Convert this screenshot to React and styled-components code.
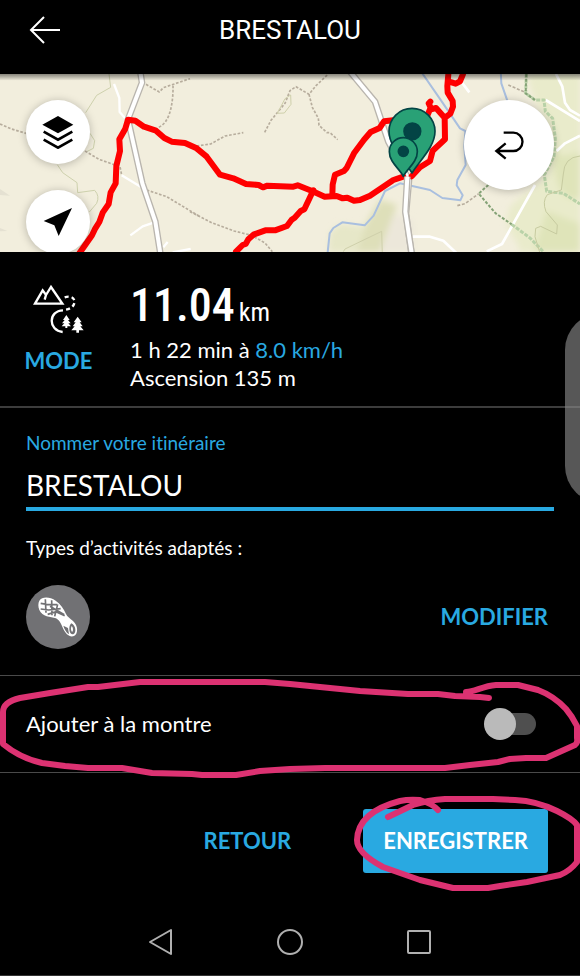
import React, { useState } from "react"
import styled, { createGlobalStyle } from "styled-components"

const blue = "#29a9e1"
const pink = "#dc3272"

const App = () => {
  const [name, setName] = useState("BRESTALOU")
  const [onWatch, setOnWatch] = useState(false)

  return (
    <Page>
      <GlobalStyle />
      <Header>
        <BackButton aria-label="Retour">
          <BackArrow />
        </BackButton>
        <HeaderTitle>BRESTALOU</HeaderTitle>
      </Header>

      <MapArea>
        <RouteMap />
        <MapTools>
          <RoundButton aria-label="Calques"><LayersIcon /></RoundButton>
          <RoundButton aria-label="Ma position"><LocateIcon /></RoundButton>
        </MapTools>
        <UndoButton aria-label="Annuler"><UndoIcon /></UndoButton>
      </MapArea>

      <Stats>
        <ModeButton>
          <TerrainIcon />
          MODE
        </ModeButton>
        <div>
          <Distance>11.04<Unit>km</Unit></Distance>
          <StatLine>1 h 22 min à <Speed>8.0 km/h</Speed></StatLine>
          <StatLine>Ascension 135 m</StatLine>
        </div>
      </Stats>

      <Details>
        <FieldLabel htmlFor="route-name">Nommer votre itinéraire</FieldLabel>
        <NameInput id="route-name" value={name} onChange={e => setName(e.target.value)} />
        <Caption>Types d’activités adaptés :</Caption>
        <Activities>
          <ShoeIcon />
          <TextButton>MODIFIER</TextButton>
        </Activities>
      </Details>

      <WatchRow>
        <label htmlFor="watch">Ajouter à la montre</label>
        <Switch
          id="watch"
          type="checkbox"
          checked={onWatch}
          onChange={e => setOnWatch(e.target.checked)}
        />
        <Scribble viewBox="0 0 580 96" preserveAspectRatio="none">
          <path d="M489 22 480 21 455 20 438 18H408L360 15 290 8 265 6H140L98 11H88L50 17 20 22Q3 26 3 36V68Q20 82 42 87L65 90 88 92H122L152 97 192 98 202 99H236L260 95 290 93 325 92H445L470 89 498 86 510 83 526 82H546L575 69Q578 67 577 62V50Q572 40 566 33Q554 20 538 14L518 9H496C482 10 475 16 466 16" />
        </Scribble>
      </WatchRow>

      <Actions>
        <TextButton>RETOUR</TextButton>
        <SaveButton>ENREGISTRER</SaveButton>
        <Scribble viewBox="0 0 580 116" preserveAspectRatio="none">
          <path d="M388 44 413 32Q428 27 445 26H493L515 27Q537 28 557 38Q573 46 577 52V89Q570 98 560 102L527 109 500 113 488 115H453L420 107 383 94Q357 80 357 67Q358 39 400 28Q409 26 420 27Q433 31 438 37" />
        </Scribble>
      </Actions>

      <SystemBar>
        <SystemKey aria-label="Précédent">
          <svg width="26" height="28" viewBox="0 0 26 28"><path d="M23 2v24L2 14Z" /></svg>
        </SystemKey>
        <SystemKey aria-label="Accueil">
          <svg width="26" height="28" viewBox="0 0 26 28"><circle cx="13" cy="14" r="12" /></svg>
        </SystemKey>
        <SystemKey aria-label="Applications récentes">
          <svg width="26" height="28" viewBox="0 0 26 28"><rect x="2" y="3" width="22" height="22" rx="1" /></svg>
        </SystemKey>
      </SystemBar>

      <EdgeHandle />
    </Page>
  )
}

const BackArrow = () => (
  <svg width="32" height="28" viewBox="0 0 32 28" fill="none" stroke="#fff" strokeWidth="2">
    <path d="M32 14H3M16 1 3 14l13 13" />
  </svg>
)

const LayersIcon = () => (
  <svg width="32" height="34" viewBox="126 134 96 102">
    <path d="M127 163 174 137 220 163 174 189Z" />
    <path d="M131 184 174 208 217 184M131 208 174 232 217 208" fill="none" stroke="#000" strokeWidth="8" />
  </svg>
)

const LocateIcon = () => (
  <svg width="30" height="30" viewBox="127 414 90 90">
    <path d="M214 417 174 501 161 469 129 456Z" />
  </svg>
)

const UndoIcon = () => (
  <svg width="30" height="30" viewBox="341 180 90 90" fill="none" stroke="#000" strokeWidth="7">
    <path d="M370 188H399A27 27 0 0 1 399 243H348M376 220 348 243 376 266" />
  </svg>
)

const TerrainIcon = () => (
  <svg width="52" height="50" viewBox="97 70 156 150" fill="none" stroke="#fff" strokeWidth="7">
    <path d="M103 129 126 89 136 103 151 79 185 129ZM136 103 132 117" />
    <path d="M192 110 C218 101 230 122 215 138 C208 145 197 147 188 148" strokeDasharray="12 9" />
    <path d="M187 149C142 150 142 210 186 214" />
    <g fill="#fff" stroke="none">
      <path d="M197 163 207 178H202L210 188H203L211 197H200V202H194V197H183L191 188H184L192 178H187Z" />
      <path d="M231 168 243 185H237L246 197H239L249 209H235V216H227V209H212L222 197H216L225 185H219Z" />
    </g>
  </svg>
)

const ShoeIcon = () => (
  <svg width="64" height="64" viewBox="33 29 192 192" role="img" aria-label="Course à pied">
    <circle cx="129" cy="125" r="96" fill="#717174" />
    <path d="M73 76C81 63 105 64 122 76C137 87 146 99 153 116C157 125 165 129 174 137C190 151 190 176 177 182C163 187 152 175 145 161C140 149 135 136 123 129C106 124 82 125 73 104C69 94 69 84 73 76Z" fill="#fff" />
    <g fill="none" stroke="#717174" strokeWidth="5">
      <path d="M91 72 93 112M110 75 111 120M128 87 119 123M77 84 101 88 127 88M77 101 101 104 137 100M98 117 123 109 149 121M105 93 148 118" />
    </g>
    <path d="M145 151 159 158 162 177C153 171 148 161 145 151ZM169 144C183 151 185 172 175 177C167 177 163 170 163 160C163 153 165 147 169 144Z" fill="#717174" />
    <path d="M170 152C175 157 175 168 171 170C167 165 167 157 170 152Z" fill="#fff" />
  </svg>
)

// Three tiles of 600 units each, overlapping by 30
const RouteMap = () => (
  <MapSvg viewBox="0 0 1740 534" preserveAspectRatio="xMidYMid slice" aria-hidden="true">
    <defs>
      <filter id="soft"><feGaussianBlur stdDeviation="9" /></filter>
      <linearGradient id="shade" x1="0" y1="0" x2="0" y2="1">
        <stop offset="0" stopOpacity=".45" />
        <stop offset="1" stopOpacity="0" />
      </linearGradient>
    </defs>
    <rect width="1740" height="534" fill="#f2eedd" />

    <g filter="url(#soft)">
      <path d="M1584 0H1740V534H1560C1550 480 1500 470 1530 400C1570 350 1660 330 1650 240C1670 150 1590 90 1584 0Z" fill="#e9ebcb" />
      <path d="M1660 230C1690 260 1740 230 1740 230V370C1700 390 1660 350 1660 230ZM1640 410 1740 450V534H1600Z" fill="#dfe4b9" />
      <path d="M985 534 990 475 1020 450 1090 458 1140 370 1180 390 1190 440 1165 534Z" fill="#e6e7c8" />
      <path d="M1100 450 1140 385 1190 390 1150 534H1070Z" fill="#dedfb9" />
      <path d="M1180 420 1140 534H1240V440Z" fill="#ece7da" />
    </g>
    <path d="M0 345 30 365 0 363ZM0 462 22 471 0 472Z" fill="#e5e1d2" />

    <g fill="none" strokeLinejoin="round">
      <g transform="translate(0 -12)">
        <path d="M327 12 332 52 290 76 257 128M270 190 284 212 280 235 260 245M172 284 188 308 231 338 233 368 284 361Q300 378 290 400L268 426" stroke="#ced1ad" strokeWidth="3" />
        <path d="M0 162 35 177 78 190M255 243 297 268 360 290 365 315M438 43 478 66 490 53 570 26M519 47C520 92 512 162 472 173M440 360 500 380 600 440" stroke="#b7ad9d" strokeWidth="5" strokeDasharray="8 5" />
        <path d="M342 42 358 84 359 126 380 150M365 316 428 354M391 496 428 469 461 458M490 532 503 516M518 547 572 537" stroke="#fff" strokeWidth="7" />
        <path d="M420 0 426 38 384 148 427 340 466 455 482 556" stroke="#b9b5ae" strokeWidth="20" />
        <path d="M420 0 426 38 384 148 427 340 466 455 482 556" stroke="#fff" strokeWidth="12" />
      </g>
      <g transform="translate(570 -12)">
        <path d="M20 228 62 222 105 198 160 188M224 187 243 151 285 100 300 62 318 50 357 73 378 47 415 12M357 73 367 112 385 145 387 166 411 188 420 188 443 209M0 425 65 458 132 483 185 496 225 519 247 545" stroke="#b7ad9d" strokeWidth="5" strokeDasharray="8 5" />
        <path d="M302 75 303 103 283 129 262 130 285 86ZM460 545 465 537 575 484 577 556" stroke="#cfd0ab" strokeWidth="3" />
        <path d="M412 556 419 490 430 474 457 457 524 466 551 437 585 363 630 340 720 360 757 384 811 391 818 376 800 346 802 330 827 285 823 230 826 183 810 175 753 91 690 0M932 0 934 40 953 95" stroke="#a9bfdf" strokeWidth="6" />
        <path d="M480 5 555 95 595 215 657 330 648 430 665 556" stroke="#b9b5ae" strokeWidth="20" />
        <path d="M480 5 555 95 595 215 657 330 648 430 665 556" stroke="#fff" strokeWidth="12" />
      </g>
      <g transform="translate(1140 -12)">
        <path d="M240 30 268 67M528 12 547 50 555 98 570 120 600 137M600 197 555 220 530 243M497 90 600 153M465 345 366 522 320 544M98 500 150 500 190 512 230 550" stroke="#fff" strokeWidth="8" />
        <path d="M385 45 438 68M232 407 255 401 296 371" stroke="#b7ad9d" strokeWidth="5" strokeDasharray="9 5" />
        <path d="M439 12 437 70 465 90 492 90 496 124 518 145 526 205 522 260 493 315 500 364 550 370 600 402M395 463 450 504 490 545" stroke="#b9d2a8" strokeWidth="9" strokeDasharray="12 4" />
        <path d="M439 12 437 70 465 90M325 345 296 371 347 430 395 463" stroke="#85a377" strokeWidth="6" strokeDasharray="9 5" />
        <path d="M600 258Q552 262 550 312L544 360 502 374Q486 394 498 425L532 465 530 492 482 469 467 475 465 500 480 550" stroke="#c7cba0" strokeWidth="3" />
      </g>
      <g stroke="#f00" strokeWidth="18" strokeLinecap="round">
        <g transform="translate(0 -12)">
          <path d="M238 550 276 496 286 475 298 456 308 428 326 402 332 367 347 340 349 288 360 243 358 208 376 176 384 149 406 152 432 170 468 182 493 204 515 215 555 219 590 235 620 260 660 314 700 325 738 342 776 345 789 352 802 347 880 350 893 346 938 364 974 380 1010 378 1028 385 1042 383 1062 392 1080 390 1110 377 1180 330 1210 320" />
        </g>
        <g transform="translate(570 -12)">
          <path d="M138 545 158 525 167 522 175 508 192 493 226 481 255 481 291 468 305 449 314 443 332 423 343 418 370 361M427 378 428 344 435 314 462 303 470 294 493 248 522 209 542 186 569 174 582 154 610 151" />
        </g>
        <g transform="translate(1140 -12)">
          <path d="M142 137 152 113 146 100 151 95M150 119 168 114 194 143 195 208 158 242 150 273 120 292 95 319M195 143 211 131 219 110 218 93 203 68 202 48 205 12M205 34 227 41 240 34 249 12" />
        </g>
      </g>
      <g transform="translate(1140 -12)">
        <path d="M82 320 76 425 96 556" stroke="#b9b5ae" strokeWidth="20" />
        <path d="M82 320 76 425 96 556" stroke="#fff" strokeWidth="12" />
      </g>
      <g transform="translate(1140 -12)" fill="#29a176" stroke="#034445" strokeWidth="5">
        <path d="M96 309C76 274 27 232 27 184A69 69 0 0 1 165 184C165 232 116 274 96 309Z" />
        <circle cx="97" cy="184" r="25" fill="#034445" />
        <path d="M70 319C59 296 28 277 28 245A42 42 0 0 1 112 245C112 277 81 296 70 319Z" />
        <circle cx="70" cy="244" r="15" fill="#034445" />
      </g>
    </g>
    <rect width="1740" height="20" fill="url(#shade)" />
  </MapSvg>
)

const GlobalStyle = createGlobalStyle`
  * {
    box-sizing: border-box;
  }

  body {
    margin: 0;
    background: #000;
  }

  button, input {
    font: inherit;
    color: inherit;
    margin: 0;
  }

  button {
    border: 0;
    padding: 0;
    background: none;
    cursor: pointer;
  }

  svg {
    display: block;
  }
`

const Page = styled.div`
  position: relative;
  overflow: hidden;
  min-height: 100vh;
  display: flex;
  flex-direction: column;
  background: #000;
  color: #fff;
  font-family: Lato, "Open Sans", sans-serif;
  font-size: 22px;
  font-variant-ligatures: none;
  line-height: 28px;
`

const Header = styled.header`
  display: grid;
  grid-template-columns: 60px 1fr 60px;
  align-items: center;
  padding: 8px 0 22px;
`

const BackButton = styled.button`
  display: flex;
  justify-content: flex-end;
  padding: 8px 0;
`

const HeaderTitle = styled.h1`
  margin: 0;
  text-align: center;
  font-family: Roboto, sans-serif;
  font-size: 26px;
  font-weight: 400;
`

const MapArea = styled.section`
  position: relative;
  overflow: hidden;
  height: 178px;
`

const MapSvg = styled.svg`
  width: 100%;
  height: 100%;
`

const MapTools = styled.div`
  position: absolute;
  top: 26px;
  left: 26px;
  display: flex;
  flex-direction: column;
  gap: 26px;
`

const RoundButton = styled.button`
  display: flex;
  align-items: center;
  justify-content: center;
  width: 64px;
  height: 64px;
  border-radius: 50%;
  background: #fff;
  box-shadow: 0 1px 8px rgba(0, 0, 0, 0.25);
`

const UndoButton = styled(RoundButton)`
  position: absolute;
  top: 26px;
  right: 26px;
  width: 90px;
  height: 90px;
`

const Stats = styled.section`
  display: grid;
  grid-template-columns: 65px 1fr;
  column-gap: 39px;
  padding: 29px 26px 14px;
  border-bottom: 2px solid #3c3c3c;
`

const ModeButton = styled.button`
  display: flex;
  flex-direction: column;
  align-items: center;
  gap: 13px;
  align-self: flex-start;
  padding-top: 3px;
  color: ${blue};
  font-weight: 700;
`

const Distance = styled.div`
  display: flex;
  align-items: baseline;
  gap: 4px;
  font-family: "Roboto Condensed", "Liberation Sans Narrow", Roboto, sans-serif;
  font-size: 46px;
  font-weight: 500;
  line-height: 48px;
`

const Unit = styled.span`
  font-size: 26px;
  font-weight: 400;
`

const StatLine = styled.p`
  margin: 0;
`

const Speed = styled.span`
  color: ${blue};
`

const Details = styled.section`
  display: flex;
  flex-direction: column;
  padding: 22px 26px 26px;
  border-bottom: 1px solid #4a4a4a;
`

const FieldLabel = styled.label`
  color: ${blue};
  font-size: 19px;
  line-height: 26px;
`

const NameInput = styled.input`
  width: 100%;
  padding: 10px 0 3px;
  border: 0;
  border-bottom: 4px solid ${blue};
  border-radius: 0;
  outline: 0;
  background: none;
  font-size: 28px;
  line-height: 38px;
`

const Caption = styled.p`
  margin: 24px 0;
  font-size: 19px;
  line-height: 26px;
`

const Activities = styled.div`
  display: flex;
  align-items: center;
  justify-content: space-between;
  padding-right: 6px;
`

const TextButton = styled.button`
  color: ${blue};
  font-weight: 700;
`

const WatchRow = styled.section`
  position: relative;
  display: flex;
  align-items: center;
  justify-content: space-between;
  padding: 34px 44px 34px 26px;
  border-bottom: 1px solid #4a4a4a;
`

const Switch = styled.input`
  appearance: none;
  display: flex;
  align-items: center;
  width: 48px;
  height: 22px;
  border-radius: 11px;
  background: #4f4f4f;

  &::before {
    content: "";
    flex: none;
    width: 32px;
    height: 32px;
    margin-left: -4px;
    border-radius: 50%;
    background: #bababa;
  }

  &:checked::before {
    margin-left: 20px;
    background: ${blue};
  }
`

const Scribble = styled.svg`
  position: absolute;
  inset: 0;
  width: 100%;
  height: 100%;
  overflow: visible;
  pointer-events: none;
  fill: none;
  stroke: ${pink};
  stroke-width: 6px;
  stroke-linecap: round;
  stroke-linejoin: round;
`

const Actions = styled.section`
  position: relative;
  display: flex;
  align-items: center;
  justify-content: flex-end;
  gap: 72px;
  padding: 36px 32px 16px;
`

const SaveButton = styled.button`
  padding: 18px 20px;
  border-radius: 3px;
  background: ${blue};
  color: #fff;
  font-weight: 700;
`

const SystemBar = styled.nav`
  display: flex;
  justify-content: center;
  gap: 103px;
  margin-top: auto;
  padding: 16px 0 19px;
  border-bottom: 1px solid #333;
`

const SystemKey = styled.button`
  svg {
    fill: none;
    stroke: #b0b0b0;
    stroke-width: 2px;
    stroke-linejoin: round;
  }
`

const EdgeHandle = styled.div`
  position: absolute;
  top: 313px;
  right: -60px;
  width: 75px;
  height: 190px;
  border-radius: 37px;
  background: rgba(140, 140, 140, 0.62);
`

export default App
